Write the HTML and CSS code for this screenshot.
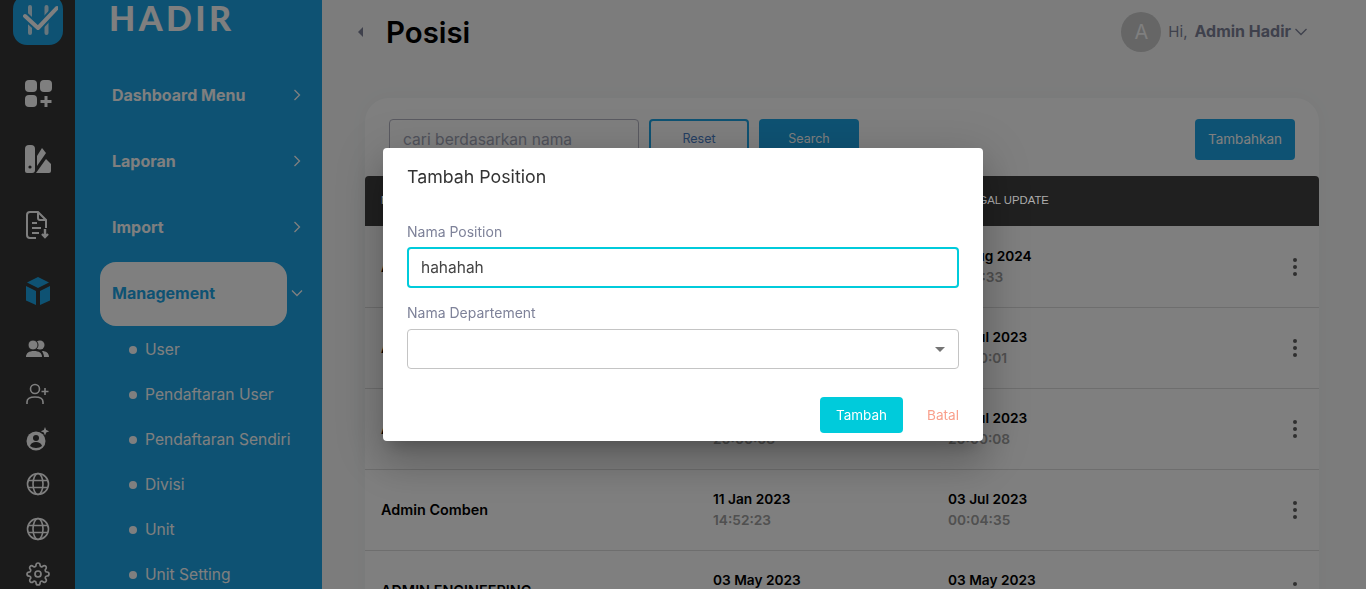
FILE: index.html
```html
<!DOCTYPE html>
<html>
  <head>
    <title>Posisi</title>
    <link rel="stylesheet" href="styles.css">
  </head>
  <body>
    <div class="rail">
      <div class="rail-logo">
        <svg width="40" height="40" viewBox="0 0 40 40" fill="none" stroke-linecap="round" stroke-linejoin="round">
          <path d="M12 7v26M28.5 7v26" stroke="#fff" stroke-width="4" opacity=".8"/>
          <path d="M7 16l13 12L39 8" stroke="#1ca5e6" stroke-width="8"/>
          <path d="M7 16l13 12L39 8" stroke="#fff" stroke-width="4"/>
        </svg>
      </div>
      <div class="rail-item big">
        <svg width="28" height="28" viewBox="0 0 28 28" fill="#fff">
          <rect x="1" y="1" width="12" height="12" rx="4"/>
          <rect x="16" y="1" width="12" height="12" rx="4"/>
          <rect x="1" y="16" width="12" height="12" rx="4"/>
          <path d="M20.5 17h3v4h4v3h-4v4h-3v-4h-4v-3h4z"/>
        </svg>
      </div>
      <div class="rail-item big">
        <svg width="28" height="28" viewBox="0 0 28 28" fill="#fff">
          <path d="M1 4a4 4 0 0 1 4-4h2a4 4 0 0 1 4 4v21a3 3 0 0 1-3 3H3a2 2 0 0 1-2-2z"/>
          <path d="M13 11l5-8 4 5-9 13z"/>
          <path d="M12 28l10-14 5 5v7a2 2 0 0 1-2 2z"/>
          <circle cx="6" cy="22" r="1.6" fill="#363636"/>
        </svg>
      </div>
      <div class="rail-item big">
        <svg width="26" height="28" viewBox="0 0 26 28" fill="none" stroke="#fff" stroke-width="2">
          <path d="M11 27H5a3 3 0 0 1-3-3V4a3 3 0 0 1 3-3h8l8 8v8"/>
          <path d="M13 1v6a2 2 0 0 0 2 2h6M7 12h5M7 17h9M7 22h7"/>
          <path d="M20 18v7M17 23l3 3 3-3" stroke-width="2.4"/>
        </svg>
      </div>
      <div class="rail-item big">
        <svg width="26" height="28" viewBox="0 0 26 28" fill="#1ca5e6">
          <path d="M13 0l11 5.5-11 5.5L2 5.500z"/>
          <path d="M1 9l10 5v14l-10-4.500zM25 9l-10 5v14l10-4.500z"/>
        </svg>
      </div>
      <div class="rail-gap"></div>
      <div class="rail-item">
        <svg width="24" height="18" viewBox="0 0 24 18" fill="#fff">
          <circle cx="14" cy="5" r="4.5"/>
          <path d="M16 11c4 0 7 2 7 6h-5c0-2-1-4-2-6z"/>
          <circle cx="7" cy="5" r="5" stroke="#363636"/>
          <path d="M0 17c0-4 3-6 8-6s8 2 8 6z"/>
        </svg>
      </div>
      <div class="rail-item">
        <svg width="24" height="22" viewBox="0 0 24 22" fill="none" stroke="#fff" stroke-width="1.6">
          <circle cx="9" cy="6" r="4.5"/>
          <path d="M1 21v-2c0-3 3-5 8-5s8 2 8 5v2M19 5v7M15.5 8.5h7"/>
        </svg>
      </div>
      <div class="rail-item">
        <svg width="24" height="24" viewBox="0 0 24 24">
          <circle cx="10" cy="14" r="9.5" fill="#fff"/>
          <circle cx="10" cy="11" r="3" fill="#363636"/>
          <path d="M4 19c1-3 3-4 6-4s5 1 6 4c-3 2.5-9 2.5-12 0z" fill="#363636"/>
          <path d="M19 0l1.200 3 3 1.200-3 1.200-1.200 3-1.200-3-3-1.200 3-1.200z" fill="#fff"/>
        </svg>
      </div>
      <div class="rail-item">
        <svg width="24" height="24" viewBox="0 0 24 24" fill="none" stroke="#fff" stroke-width="1.6">
          <circle cx="12" cy="12" r="10.5"/>
          <ellipse cx="12" cy="12" rx="5" ry="10.5"/>
          <path d="M2 8.5h20M2 15.5h20"/>
        </svg>
      </div>
      <div class="rail-item">
        <svg width="24" height="24" viewBox="0 0 24 24" fill="none" stroke="#fff" stroke-width="1.6">
          <circle cx="12" cy="12" r="10.5"/>
          <ellipse cx="12" cy="12" rx="5" ry="10.5"/>
          <path d="M2 8.5h20M2 15.5h20"/>
        </svg>
      </div>
      <div class="rail-item">
        <svg width="24" height="24" viewBox="0 0 24 24" fill="none" stroke="#fff" stroke-width="1.7" stroke-linejoin="round">
          <circle cx="12" cy="12" r="3"/>
          <path d="M19.4 15a1.65 1.65 0 0 0 .33 1.82l.06.06a2 2 0 0 1 0 2.83 2 2 0 0 1-2.83 0l-.06-.06a1.65 1.65 0 0 0-1.82-.33 1.65 1.65 0 0 0-1 1.51V21a2 2 0 0 1-2 2 2 2 0 0 1-2-2v-.09A1.65 1.65 0 0 0 9 19.4a1.65 1.65 0 0 0-1.82.33l-.06.06a2 2 0 0 1-2.83 0 2 2 0 0 1 0-2.83l.06-.06a1.65 1.65 0 0 0 .33-1.82 1.65 1.65 0 0 0-1.51-1H3a2 2 0 0 1-2-2 2 2 0 0 1 2-2h.09A1.65 1.65 0 0 0 4.6 9a1.65 1.65 0 0 0-.33-1.82l-.06-.06a2 2 0 0 1 0-2.83 2 2 0 0 1 2.83 0l.06.06a1.65 1.65 0 0 0 1.82.33H9a1.65 1.65 0 0 0 1-1.51V3a2 2 0 0 1 2-2 2 2 0 0 1 2 2v.09a1.65 1.65 0 0 0 1 1.51 1.65 1.65 0 0 0 1.82-.33l.06-.06a2 2 0 0 1 2.83 0 2 2 0 0 1 0 2.83l-.06.06a1.65 1.65 0 0 0-.33 1.82V9a1.65 1.65 0 0 0 1.51 1H21a2 2 0 0 1 2 2 2 2 0 0 1-2 2h-.09a1.65 1.65 0 0 0-1.51 1z"/>
        </svg>
      </div>
    </div>

    <div class="sidebar">
      <div class="brand">HADIR</div>
      <div class="nav-item">
        <span class="nav-label">Dashboard Menu</span>
        <svg class="chev" width="8" height="12" viewBox="0 0 8 12"><path d="M1.5 1l5 5-5 5"/></svg>
      </div>
      <div class="nav-item">
        <span class="nav-label">Laporan</span>
        <svg class="chev" width="8" height="12" viewBox="0 0 8 12"><path d="M1.5 1l5 5-5 5"/></svg>
      </div>
      <div class="nav-item">
        <span class="nav-label">Import</span>
        <svg class="chev" width="8" height="12" viewBox="0 0 8 12"><path d="M1.5 1l5 5-5 5"/></svg>
      </div>
      <div class="nav-item">
        <span class="nav-label active">Management</span>
        <svg class="chev down" width="12" height="8" viewBox="0 0 12 8"><path d="M1 1.5l5 5 5-5"/></svg>
      </div>
      <ul class="sub-nav">
        <li>User</li>
        <li>Pendaftaran User</li>
        <li>Pendaftaran Sendiri</li>
        <li>Divisi</li>
        <li>Unit</li>
        <li>Unit Setting</li>
      </ul>
    </div>

    <div class="main">
      <div class="topbar">
        <span class="toggle"></span>
        <h1>Posisi</h1>
        <div class="user">
          <span class="avatar">A</span>
          <span class="hi">Hi,</span>
          <b>Admin Hadir</b>
          <svg class="user-chev" width="12" height="8" viewBox="0 0 12 8"><path d="M.5 1L6 6.5 11.5 1"/></svg>
        </div>
      </div>

      <div class="card">
        <div class="toolbar">
          <input class="search" type="text" placeholder="cari berdasarkan nama">
          <button class="btn outline">Reset</button>
          <button class="btn solid">Search</button>
          <button class="btn solid add">Tambahkan</button>
        </div>
        <div class="row head">
          <div class="col-name">NAMA POSISI</div>
          <div class="col-date">TANGGAL DIBUAT</div>
          <div class="col-date">TANGGAL UPDATE</div>
        </div>
        <div class="row">
          <div class="col-name">Admin</div>
          <div class="col-date">14 Aug 2024<span>10:12:33</span></div>
          <div class="col-date">14 Aug 2024<span>10:12:33</span></div>
          <div class="kebab"><i></i><i></i><i></i></div>
        </div>
        <div class="row">
          <div class="col-name">Admin</div>
          <div class="col-date">03 Jul 2023<span>20:00:01</span></div>
          <div class="col-date">03 Jul 2023<span>20:00:01</span></div>
          <div class="kebab"><i></i><i></i><i></i></div>
        </div>
        <div class="row">
          <div class="col-name">Admin</div>
          <div class="col-date">03 Jul 2023<span>20:00:08</span></div>
          <div class="col-date">03 Jul 2023<span>20:00:08</span></div>
          <div class="kebab"><i></i><i></i><i></i></div>
        </div>
        <div class="row">
          <div class="col-name">Admin Comben</div>
          <div class="col-date">11 Jan 2023<span>14:52:23</span></div>
          <div class="col-date">03 Jul 2023<span>00:04:35</span></div>
          <div class="kebab"><i></i><i></i><i></i></div>
        </div>
        <div class="row">
          <div class="col-name">ADMIN ENGINEERING</div>
          <div class="col-date">03 May 2023<span>10:00:00</span></div>
          <div class="col-date">03 May 2023<span>10:00:00</span></div>
          <div class="kebab"><i></i><i></i><i></i></div>
        </div>
      </div>
    </div>

    <div class="backdrop"></div>
    <div class="modal">
      <div class="modal-title">Tambah Position</div>
      <label class="field-label first">Nama Position</label>
      <input class="field focus" type="text" value="hahahah">
      <label class="field-label">Nama Departement</label>
      <div class="field select"><span class="caret"></span></div>
      <div class="modal-actions">
        <button class="btn-add">Tambah</button>
        <button class="btn-cancel">Batal</button>
      </div>
    </div>
  </body>
</html>
```

FILE: styles.css
```css
* {
  box-sizing: border-box;
}
html,
body {
  height: 589px;
  overflow: hidden;
}
body {
  margin: 0;
  display: flex;
  background-color: #f8f9f9;
  font-family: Inter, "Noto Sans", sans-serif;
  color: #181c32;
}

/* left icon rail */
.rail {
  width: 75px;
  flex-shrink: 0;
  background-color: #363636;
  display: flex;
  flex-direction: column;
  align-items: center;
  height: 589px;
  overflow: hidden;
}
.rail-logo {
  width: 50px;
  height: 50px;
  margin-top: -5px;
  margin-bottom: 15px;
  flex-shrink: 0;
  background-color: #1ca5e6;
  border-radius: 14px;
  display: flex;
  align-items: center;
  justify-content: center;
}
.rail-item {
  height: 45px;
  flex-shrink: 0;
  display: flex;
  align-items: center;
  justify-content: center;
}
.rail-item.big {
  height: 66px;
}
.rail-gap {
  height: 2px;
  flex-shrink: 0;
}

/* blue sidebar */
.sidebar {
  width: 247px;
  flex-shrink: 0;
  background-color: #1ca5e6;
  height: 589px;
  overflow: hidden;
  color: #fff;
}
.brand {
  height: 62px;
  padding-left: 34px;
  font-family: Lato, sans-serif;
  font-size: 34px;
  font-weight: 900;
  letter-spacing: 3.4px;
  line-height: 36px;
}
.nav-item {
  height: 66px;
  padding-left: 25px;
  display: flex;
  align-items: center;
}
.nav-label {
  width: 187px;
  height: 64px;
  padding-left: 12px;
  display: flex;
  align-items: center;
  font-size: 16px;
  font-weight: 700;
}
.nav-label.active {
  margin-top: 2px;
  padding-bottom: 2px;
  background-color: #fff;
  color: #1ca5e6;
  border-radius: 16px;
}
.chev {
  margin-left: 6px;
  fill: none;
  stroke: #fff;
  stroke-width: 1.3;
}
.chev.down {
  margin-left: 4px;
}
.sub-nav {
  list-style: none;
  margin: 1px 0 0;
  padding: 0;
}
.sub-nav li {
  height: 45px;
  padding-left: 70px;
  display: flex;
  align-items: center;
  font-size: 15.6px;
  position: relative;
}
.sub-nav li::before {
  content: "";
  position: absolute;
  left: 54px;
  top: 19px;
  width: 8px;
  height: 8px;
  border-radius: 50%;
  background-color: #fff;
}

/* main content */
.main {
  flex: 1;
  min-width: 0;
  height: 589px;
  overflow: hidden;
}
.topbar {
  height: 64px;
  display: flex;
  align-items: center;
  padding: 0 59px 0 36px;
}
.toggle {
  width: 0;
  height: 0;
  border-top: 5px solid transparent;
  border-bottom: 5px solid transparent;
  border-right: 5px solid #7e8299;
  margin-right: 23px;
}
h1 {
  margin: 0;
  font-size: 29.4px;
  font-weight: 600;
  color: #000;
}
.user {
  margin-left: auto;
  display: flex;
  align-items: center;
  color: #7e8299;
  font-size: 15px;
}
.avatar {
  width: 40px;
  height: 40px;
  border-radius: 50%;
  background-color: #ccc;
  color: #fff;
  display: flex;
  align-items: center;
  justify-content: center;
  font-size: 20px;
  margin-right: 7px;
}
.hi {
  margin-right: 7px;
  padding-bottom: 2px;
}
.user b {
  font-size: 16px;
  font-weight: 700;
  padding-bottom: 2px;
}
.user-chev {
  margin-left: 4px;
  fill: none;
  stroke: #7e8299;
  stroke-width: 1.3;
}
.card {
  margin: 34px 47px 0 43px;
  background-color: #fff;
  border-radius: 24px 24px 0 0;
  padding-top: 21px;
  box-shadow: 0 0 20px rgba(0, 0, 0, 0.03);
}
.toolbar {
  display: flex;
  gap: 10px;
  padding: 0 24px;
  height: 57px;
}
.search {
  width: 250px;
  height: 41px;
  padding: 0 13px;
  border: 1px solid #b5b5c3;
  border-radius: 4px;
  font-family: inherit;
  font-size: 15.6px;
}
.search::placeholder {
  color: #a1a5b7;
}
.btn {
  width: 100px;
  height: 41px;
  border-radius: 4px;
  font-family: inherit;
  font-size: 12.5px;
  padding: 0 0 2px;
}
.btn.outline {
  background-color: #fff;
  border: 2px solid #1ca5e6;
  color: #4a7fc7;
}
.btn.solid {
  background-color: #1ca5e6;
  border: none;
  color: #fff;
}
.btn.add {
  margin-left: auto;
  font-size: 13.5px;
}
.row {
  height: 81px;
  display: flex;
  align-items: center;
  padding-left: 16px;
  border-bottom: 1px solid #dcdcdc;
  font-size: 14.4px;
  font-weight: 600;
  color: #000;
}
/* table head stays above the backdrop, its text is not dimmed */
.row.head {
  height: 50px;
  margin-bottom: 1px;
  padding-bottom: 1px;
  position: relative;
  z-index: 20;
  border-bottom: none;
  border-radius: 4px 4px 0 0;
  background-color: #202020;
  color: #adadad;
  font-family: "Liberation Sans", sans-serif;
  font-size: 11.3px;
  font-weight: 400;
}
.col-name {
  width: 332px;
  padding-bottom: 1px;
}
.col-date {
  width: 235px;
  font-size: 13.7px;
  line-height: 21px;
}
.row.head .col-date {
  font-size: 11.3px;
}
.col-date span {
  display: block;
  color: #a0a0a0;
  font-weight: 600;
}
.kebab {
  margin-left: auto;
  margin-right: 22px;
  display: flex;
  flex-direction: column;
  gap: 3px;
}
.kebab i {
  width: 4px;
  height: 4px;
  border-radius: 50%;
  background-color: #5e5e5e;
}

/* dialog over the page */
.backdrop {
  position: fixed;
  z-index: 10;
  left: 0;
  top: 0;
  width: 1366px;
  height: 589px;
  background-color: rgba(0, 0, 0, 0.5);
}
.modal {
  position: fixed;
  z-index: 30;
  left: 383px;
  top: 148px;
  width: 600px;
  height: 293px;
  padding: 0 24px;
  background-color: #fff;
  border-radius: 4px;
  box-shadow: 0 11px 15px -7px rgba(0, 0, 0, 0.2), 0 24px 38px 3px rgba(0, 0, 0, 0.14), 0 9px 46px 8px rgba(0, 0, 0, 0.12);
}
.modal-title {
  height: 58px;
  line-height: 58px;
  font-size: 17.8px;
  font-weight: 400;
  color: #333;
}
.field-label {
  display: block;
  height: 28px;
  line-height: 24px;
  font-size: 14px;
  color: #7e8299;
}
.field-label.first {
  margin-top: 13px;
  line-height: 25px;
}
.field {
  display: block;
  width: 552px;
  height: 41px;
  border-radius: 4px;
  font-family: inherit;
}
.field.focus {
  margin-bottom: 13px;
  border: 2px solid #00cbdb;
  padding: 0 12px;
  font-size: 15.5px;
  color: #444;
  outline: none;
}
.field.select {
  height: 40px;
  border: 1px solid #c4c4c4;
  display: flex;
  align-items: center;
  justify-content: flex-end;
  padding-right: 13px;
}
.caret {
  width: 0;
  height: 0;
  border-left: 5px solid transparent;
  border-right: 5px solid transparent;
  border-top: 5px solid #757575;
}
.modal-actions {
  margin-top: 28px;
  display: flex;
  justify-content: flex-end;
  align-items: center;
  gap: 24px;
}
.btn-add {
  width: 83px;
  height: 36px;
  padding: 0;
  border: none;
  border-radius: 4px;
  background-color: #00cbdb;
  color: #fff;
  font-family: inherit;
  font-size: 13.5px;
}
.btn-cancel {
  border: none;
  padding: 0;
  background: none;
  color: #f9a08c;
  font-family: inherit;
  font-size: 13.6px;
}
```
